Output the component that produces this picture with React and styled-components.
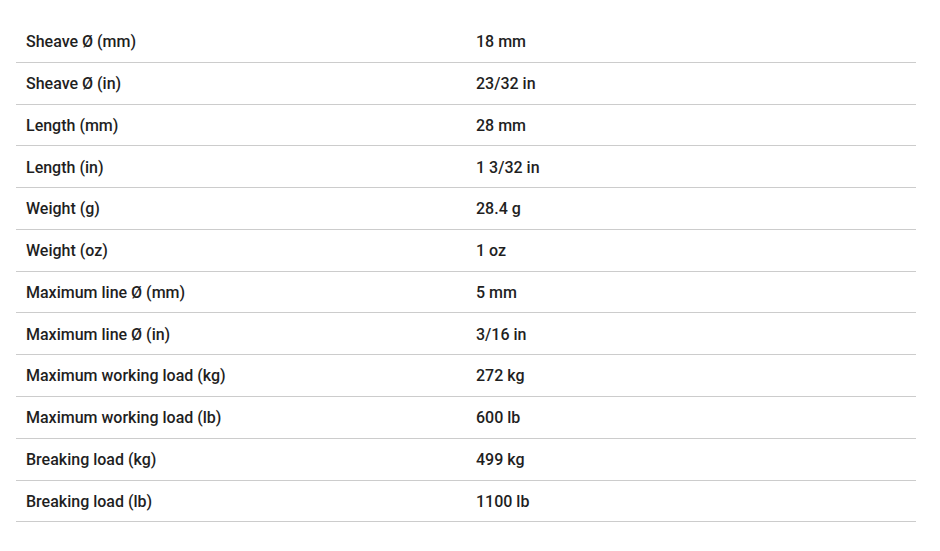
import React from "react";
import styled, { createGlobalStyle } from "styled-components";

const GlobalStyle = createGlobalStyle`
  html, body { margin: 0; padding: 0; background: #ffffff; }
  body { font-family: Roboto, "Noto Sans", Arial, sans-serif; }
`;

const Wrapper = styled.div`
  padding: 21px 24px 0 16px;
  width: 900px;
`;

const Table = styled.table`
  width: 900px;
  border-collapse: collapse;
  table-layout: fixed;
`;

const Row = styled.tr`
  border-bottom: 1px solid #cccccc;
`;

const Cell = styled.td`
  width: 50%;
  padding: 9.2px 10px 7.6px;
  line-height: 24px;
  font-size: 16px;
  font-weight: 500;
  color: #1f1f1f;
  text-align: left;
  vertical-align: middle;
`;

const rows = [
  ["Sheave Ø (mm)", "18 mm"],
  ["Sheave Ø (in)", "23/32 in"],
  ["Length (mm)", "28 mm"],
  ["Length (in)", "1 3/32 in"],
  ["Weight (g)", "28.4 g"],
  ["Weight (oz)", "1 oz"],
  ["Maximum line Ø (mm)", "5 mm"],
  ["Maximum line Ø (in)", "3/16 in"],
  ["Maximum working load (kg)", "272 kg"],
  ["Maximum working load (lb)", "600 lb"],
  ["Breaking load (kg)", "499 kg"],
  ["Breaking load (lb)", "1100 lb"],
];

export default function App() {
  return (
    <>
      <GlobalStyle />
      <Wrapper>
        <Table>
          <tbody>
            {rows.map(([k, v]) => (
              <Row key={k}>
                <Cell>{k}</Cell>
                <Cell>{v}</Cell>
              </Row>
            ))}
          </tbody>
        </Table>
      </Wrapper>
    </>
  );
}
